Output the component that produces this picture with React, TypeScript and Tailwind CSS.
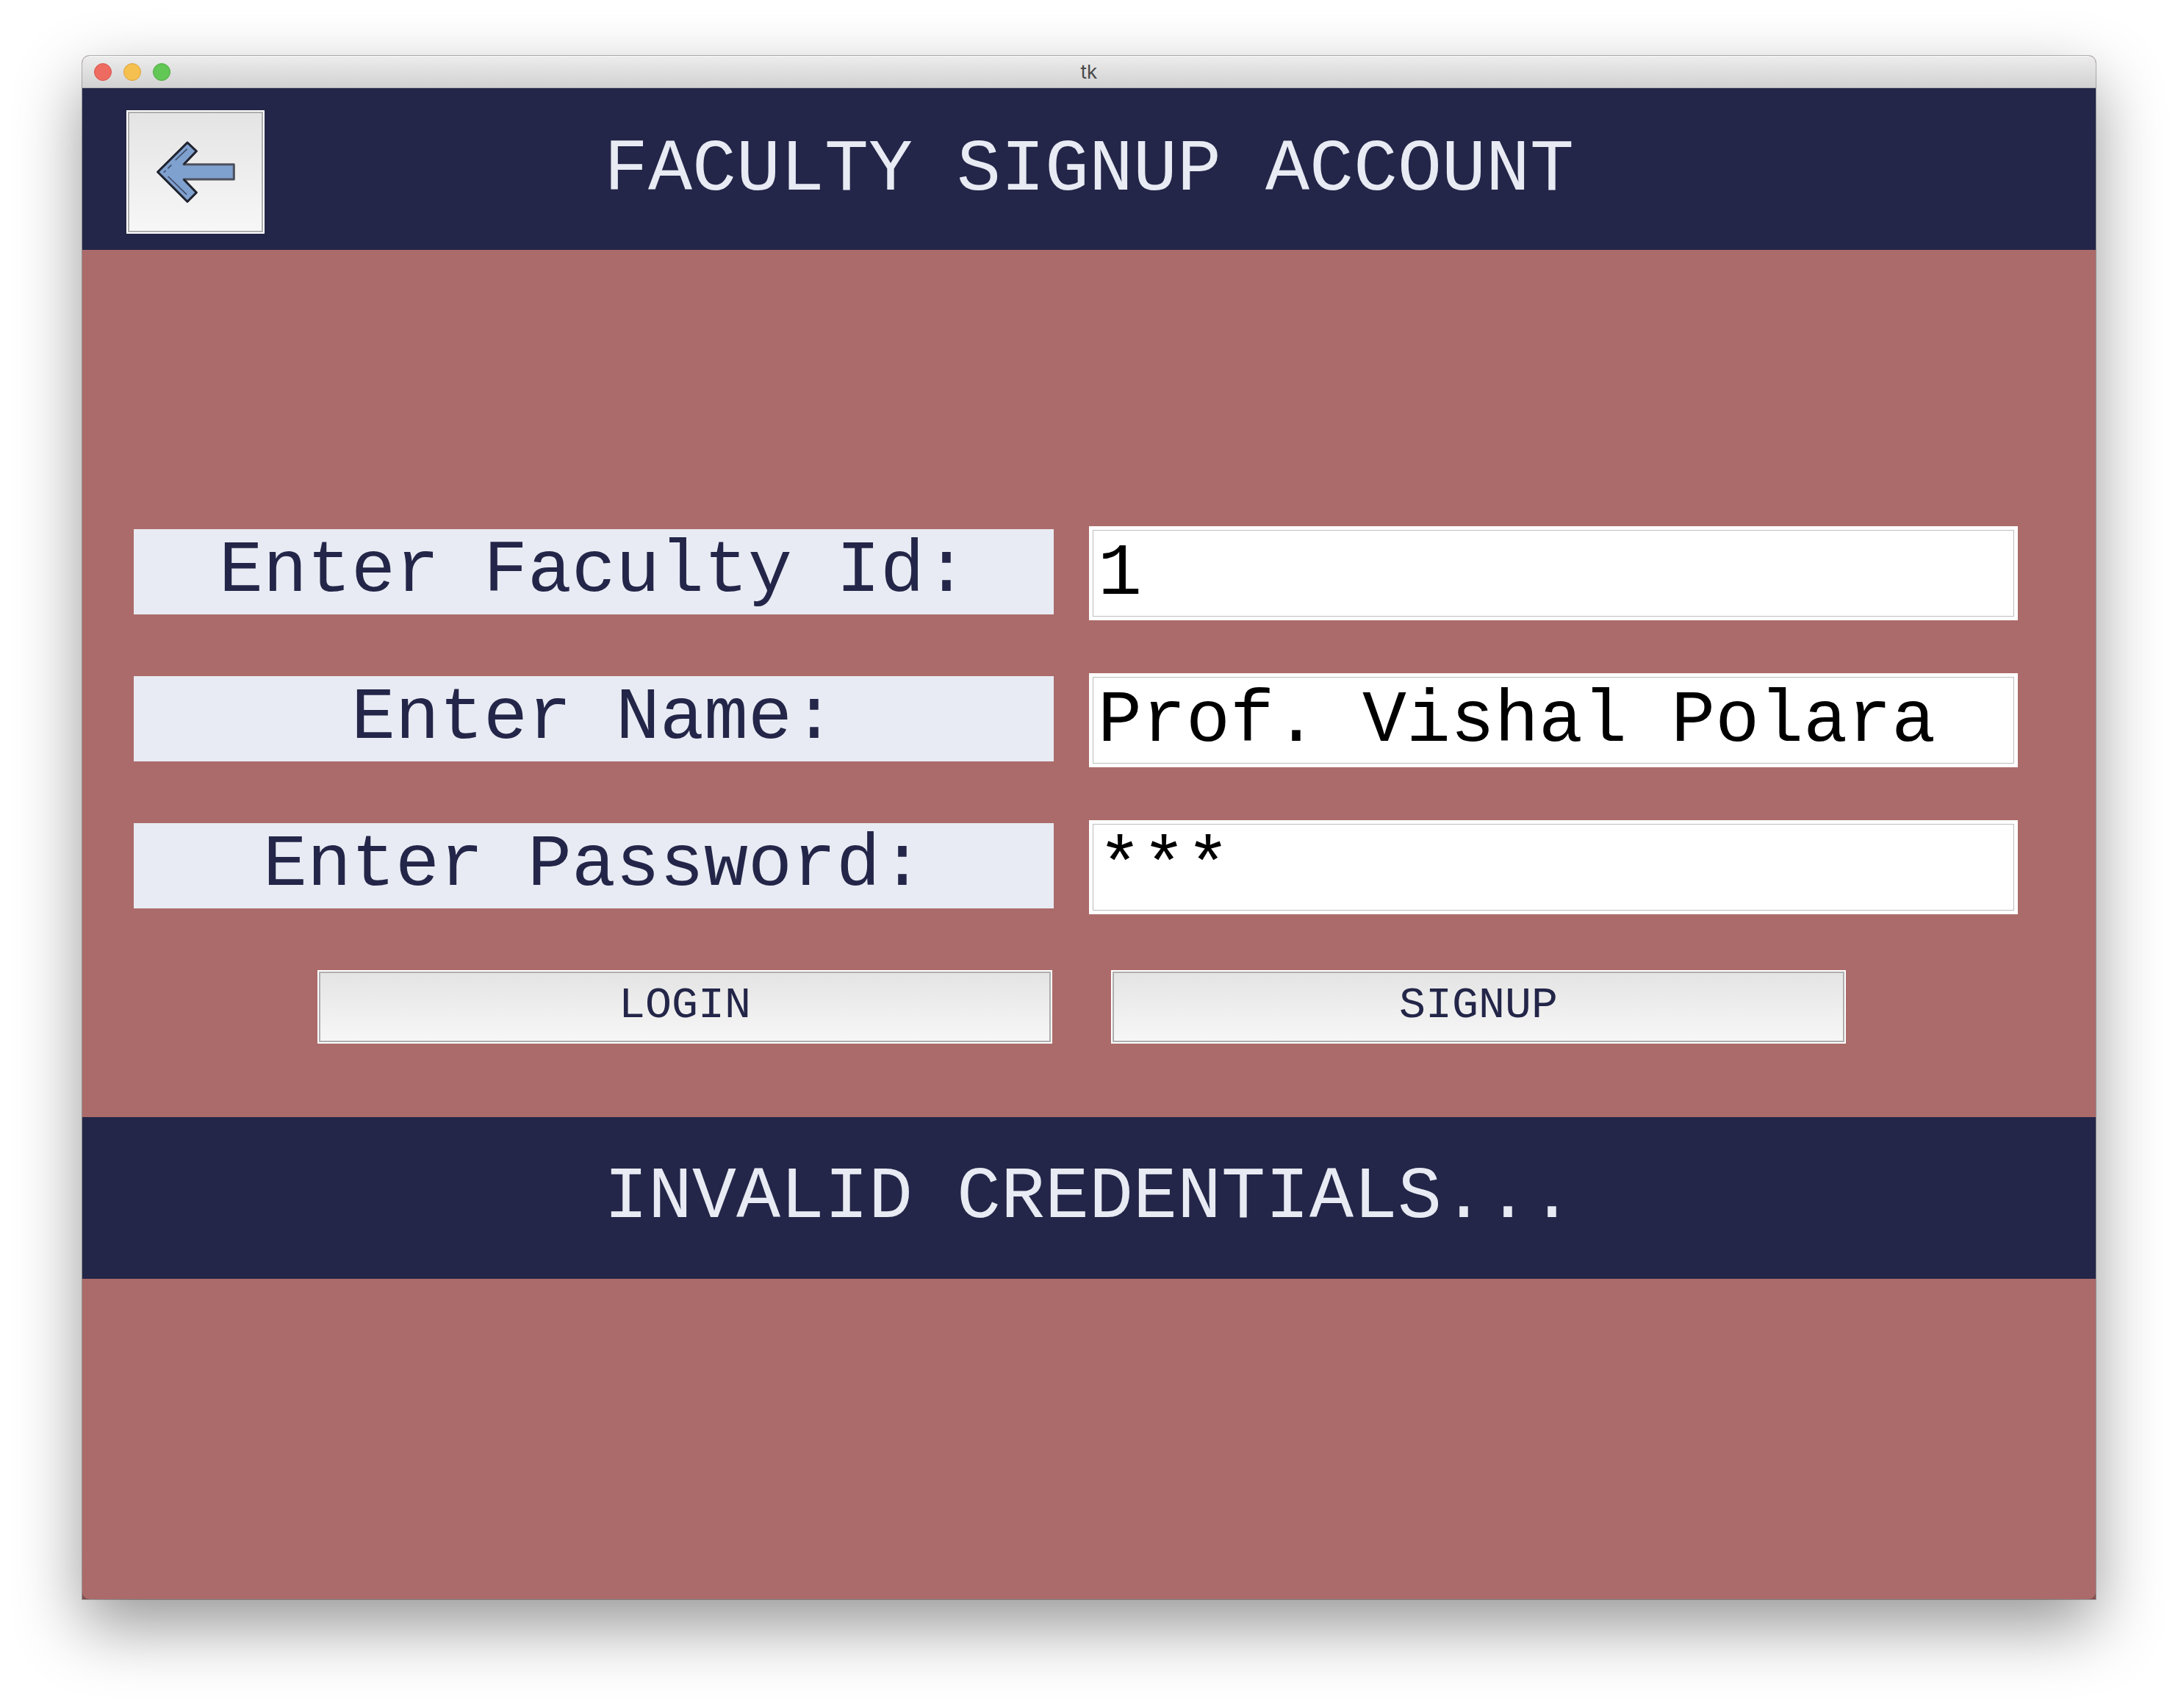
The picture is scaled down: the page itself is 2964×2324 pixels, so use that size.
import React, { useState } from "react";

type FieldProps = {
  id: string;
  label: string;
  initial: string;
};

function Field({ id, label, initial }: FieldProps) {
  const [value, setValue] = useState(initial);
  return (
    <div className="grid grid-cols-[1252fr_1264fr] items-start gap-12">
      <label
        htmlFor={id}
        className="mt-1 block bg-[#e8ebf3] text-center text-[100px] leading-[116px] whitespace-nowrap text-[#232648]"
      >
        {label}
      </label>
      <input
        id={id}
        type="text"
        autoComplete="off"
        value={value}
        onChange={(e) => setValue(e.target.value)}
        className="h-32 w-full min-w-0 border-[5px] border-white bg-white px-[7px] pt-[2px] text-[100px] leading-[116px] text-black shadow-[inset_0_0_0_1px_#bdbdbd] outline-none"
      />
    </div>
  );
}

function ActionButton({ children }: { children: React.ReactNode }) {
  return (
    <button
      type="button"
      className="h-[100px] border-2 border-white bg-linear-to-b from-[#e4e4e4] to-[#f7f7f7] pb-1 text-center text-6xl text-[#232648] shadow-[inset_0_0_0_2px_#adadad]"
    >
      {children}
    </button>
  );
}

function BackArrow() {
  return (
    <svg viewBox="357 390 342 264" className="h-[88px] w-[114px]" aria-hidden="true">
      <path
        d="M374 522 L495 402 L532 437 L480 491 H685 V552 H480 L532 606 L495 643 Z"
        fill="#7fa1d0"
        stroke="#4d515c"
        strokeWidth="9"
        strokeLinejoin="round"
      />
      <path
        d="M480 491 L532 437 L495 402 L374 522 L495 643 L532 606 L480 552"
        fill="none"
        stroke="#20232f"
        strokeWidth="8"
        strokeLinejoin="round"
      />
      <path
        d="M494 428 L446 474 M430 493 L415 508 M407 516 L398 524 M416 540 L492 614"
        fill="none"
        stroke="#3f4d69"
        strokeWidth="5"
      />
    </svg>
  );
}

export default function App() {
  return (
    <div className="flex min-h-screen flex-col bg-white px-28 pt-[76px] pb-[148px] font-['Liberation_Mono',monospace]">
      <div className="flex flex-1 flex-col rounded-t-[10px] bg-[#824f50] shadow-[0_0_0_1px_rgba(0,0,0,0.28),0_36px_90px_rgba(0,0,0,0.41)]">
        <div className="grid h-11 grid-cols-[1fr_auto_1fr] items-center rounded-t-[10px] border-t border-b border-t-[#f8f8f8] border-b-[#b0b0b0] bg-linear-to-b from-[#ececec] to-[#d2d2d2] px-4">
          <div className="flex gap-4">
            <button type="button" aria-label="Close" className="size-6 rounded-full border border-[#d9534b] bg-[#ed6b60]" />
            <button type="button" aria-label="Minimize" className="size-6 rounded-full border border-[#dba33d] bg-[#f5c04f]" />
            <button type="button" aria-label="Zoom" className="size-6 rounded-full border border-[#4ea93f] bg-[#62c755]" />
          </div>
          <span className="font-[Inter,sans-serif] text-[26px] leading-8 text-[#4a4a4a]">tk</span>
        </div>

        <div className="flex flex-1 flex-col rounded-b-[10px] bg-[#ab6b6a]">
          <header className="grid h-[220px] grid-cols-[188px_1fr_188px] items-center bg-[#232648] px-[60px] pt-1">
            <button
              type="button"
              aria-label="Back"
              className="mt-1 flex h-[168px] items-center justify-center border-2 border-white bg-linear-to-b from-[#e4e4e4] to-[#f7f7f7] shadow-[inset_0_0_0_2px_#adadad]"
            >
              <BackArrow />
            </button>
            <h1 className="text-center text-[100px] leading-[116px] whitespace-nowrap text-[#e8ebf3]">
              FACULTY SIGNUP ACCOUNT
            </h1>
          </header>

          <form className="pt-[376px] pb-[100px]" onSubmit={(e) => e.preventDefault()}>
            <div className="flex flex-col gap-[72px] pr-[106px] pl-[70px]">
              <Field id="faculty-id" label="Enter Faculty Id:" initial="1" />
              <Field id="faculty-name" label="Enter Name:" initial="Prof. Vishal Polara" />
              <Field id="faculty-password" label="Enter Password:" initial="***" />
            </div>
            <div className="mt-[76px] grid grid-cols-2 gap-20 pr-[340px] pl-[320px]">
              <ActionButton>LOGIN</ActionButton>
              <ActionButton>SIGNUP</ActionButton>
            </div>
          </form>

          <p
            role="status"
            className="bg-[#232648] text-center text-[100px] leading-[220px] whitespace-nowrap text-[#e8ebf3]"
          >
            INVALID CREDENTIALS...
          </p>
        </div>
      </div>
    </div>
  );
}
